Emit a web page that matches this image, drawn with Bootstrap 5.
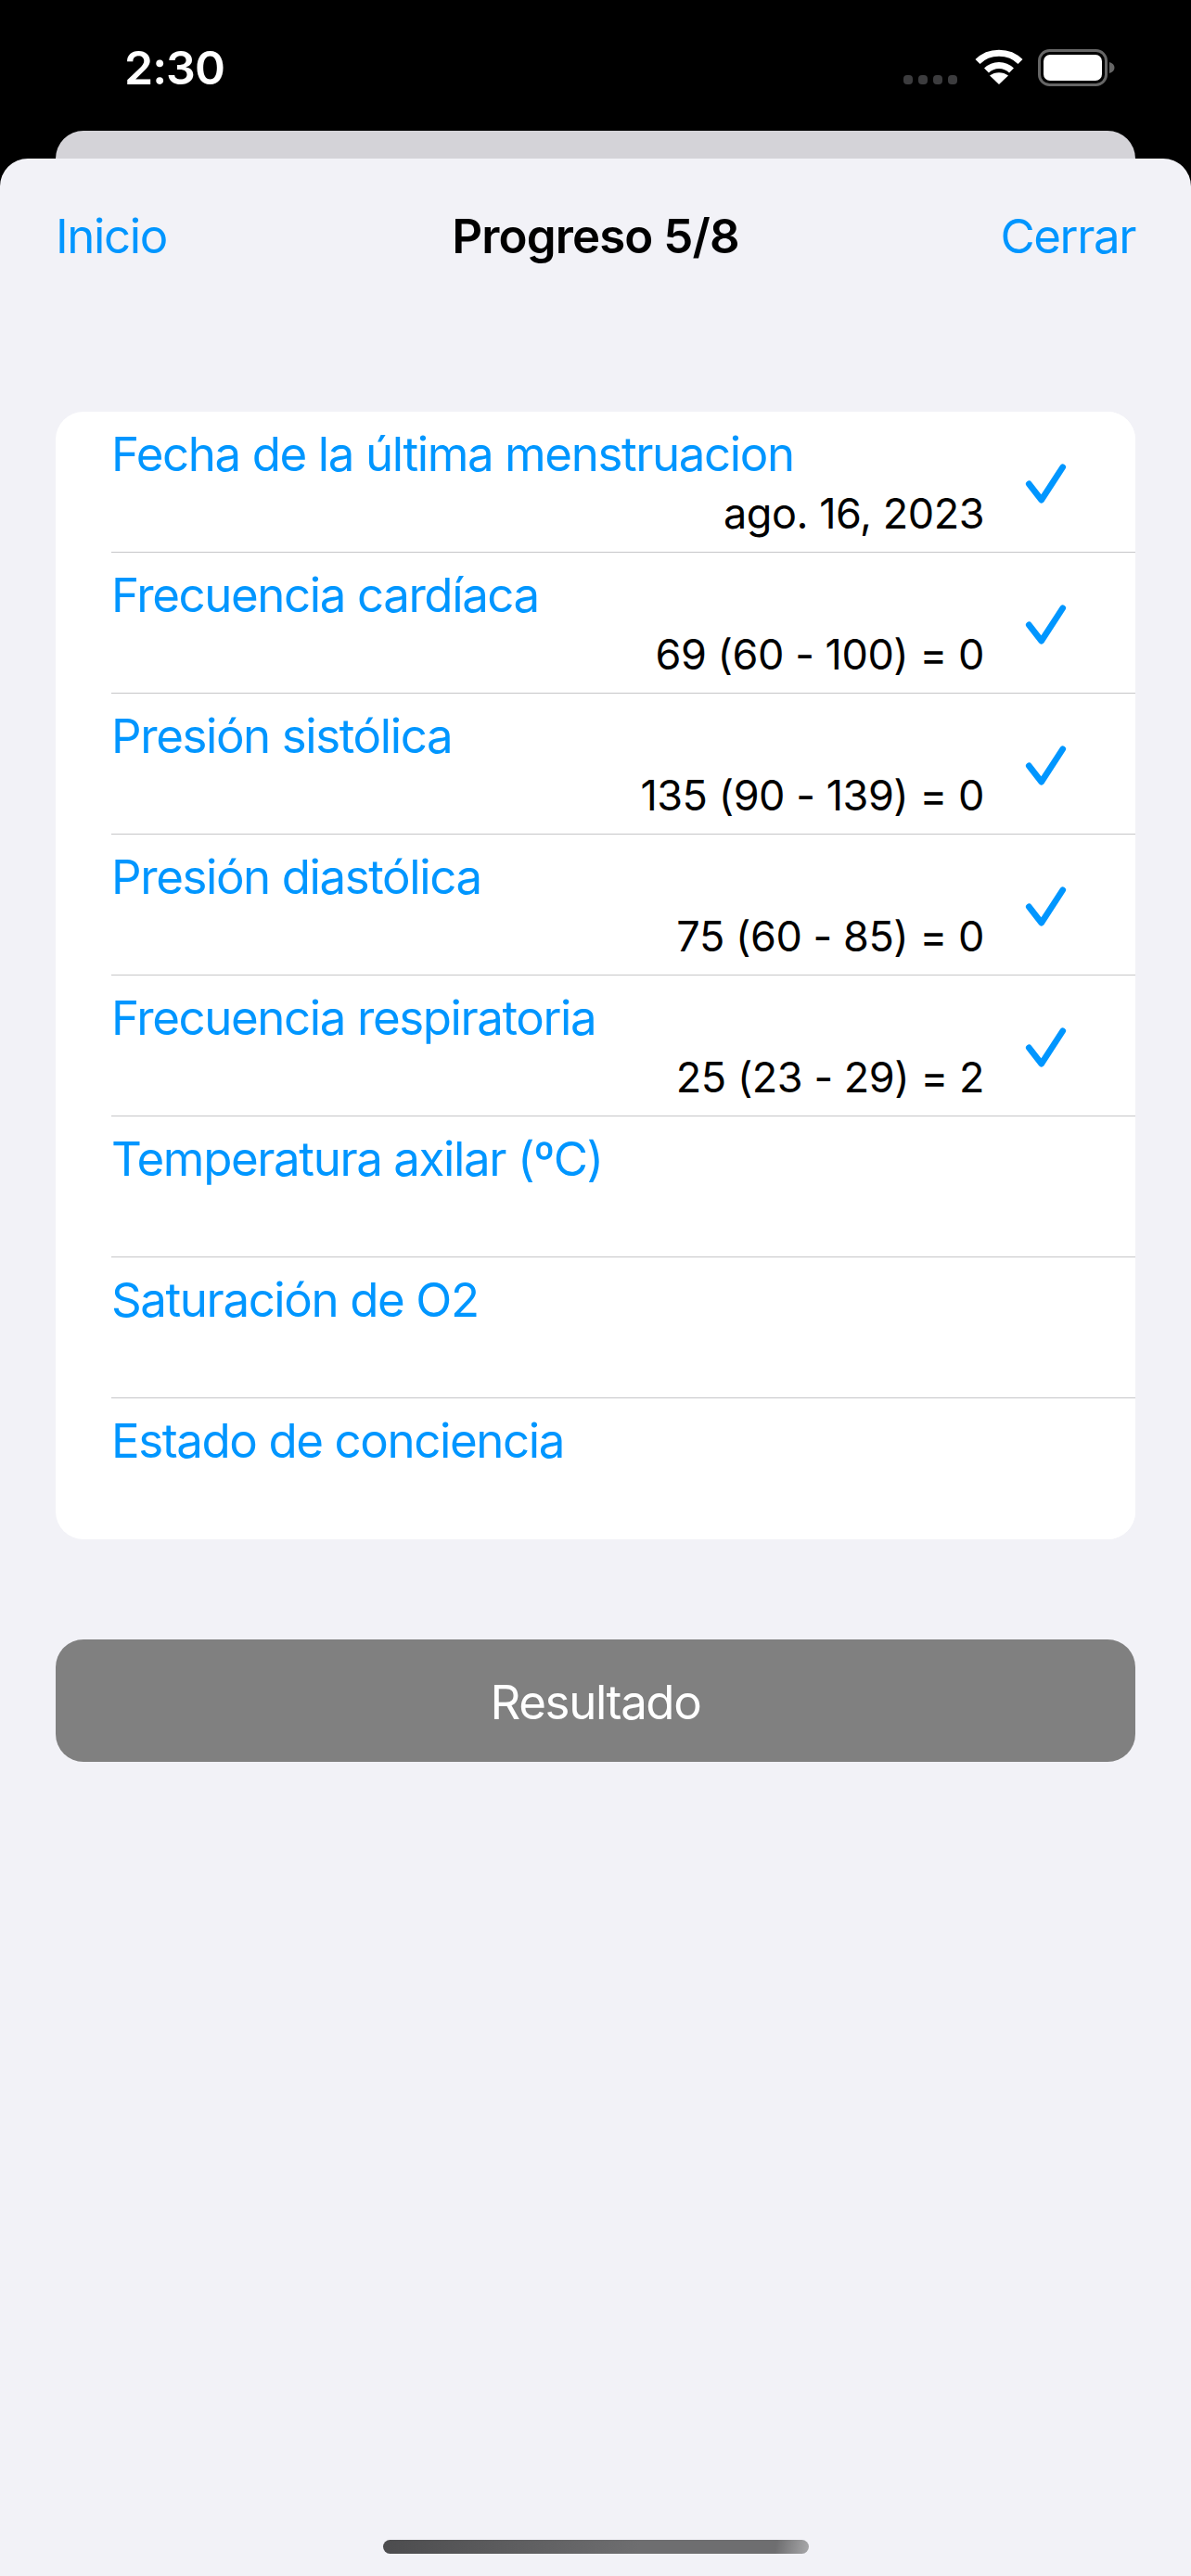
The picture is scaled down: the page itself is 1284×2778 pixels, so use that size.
<!DOCTYPE html>
<html lang="es">
<head>
<meta charset="utf-8">
<title>Progreso</title>
<link href="https://cdn.jsdelivr.net/npm/bootstrap@5.3.0/dist/css/bootstrap.min.css" rel="stylesheet">
<style>
html,body{height:100%;}
body{background:#000;font-family:"Inter","Liberation Sans",sans-serif;font-size:51px;overflow:hidden;color:#000;}
.phone{height:2778px;}
.status-row{height:141px;padding:0 82px 0 134px;color:#fff;}
.clock{font-size:50px;font-weight:600;line-height:1;margin-top:48px;letter-spacing:-1px;}
.status-icons{margin-top:53px;height:40px;}
.status-dots{gap:6px;margin-top:28px;margin-right:19px;}
.status-dots i{display:block;width:10px;height:10px;border-radius:4px;background:#3c3c3e;}
.peek{height:30px;margin:0 60px;background:#d4d3d8;border-radius:30px 30px 0 0;}
.sheet{background:#f2f2f7;border-radius:30px 30px 0 0;}
.sheet-nav{padding:53px 60px 0;height:153px;line-height:1.2;}
.nav-side{flex:1 1 0;}
.sheet-link{color:#0096ff;text-decoration:none;letter-spacing:-1.4px;}
.sheet-title{font-size:51px;font-weight:600;margin:0;line-height:1.2;letter-spacing:-.9px;color:#000;}
.sheet-body{padding:120px 60px 0;}
.form-list{border-radius:30px;overflow:hidden;background:#fff;}
.form-row{height:152px;margin-left:60px;padding:0;background:#fff;border:0;border-radius:0;border-bottom:2px solid #c6c6c8;}
.form-row:last-child{border-bottom:0;}
.row-text{width:941px;height:100%;}
.row-label{color:#0096ff;line-height:60px;padding-top:16px;letter-spacing:-1.4px;}
.row-value{color:#000;font-size:45px;line-height:60px;text-align:right;margin-top:4px;letter-spacing:-.45px;}
.row-check{width:90px;padding-left:44px;}
.result-btn{display:block;width:100%;height:132px;margin-top:108px;background:#808080;border:0;border-radius:30px;color:#fff;font-size:51px;letter-spacing:-1.4px;padding-top:10px;}
.result-btn:hover,.result-btn:active{background:#808080;color:#fff;}
.home-wrap{padding-bottom:24px;}
.home-bar{width:459px;height:15px;border-radius:8px;background:linear-gradient(100deg,#4c4c4e 0%,#6e6e70 60%,#6e6e70 92%,#a8a8aa 100%);}
</style>
</head>
<body>
<div class="phone d-flex flex-column">
  <div class="status-row d-flex justify-content-between">
    <div class="clock">2:30</div>
    <div class="status-icons d-flex">
      <div class="status-dots d-flex"><i></i><i></i><i></i><i></i></div>
      <svg width="52" height="38" viewBox="0 0 52 38" class="me-3" aria-hidden="true">
        <path d="M3 13.5C15 1 37 1 49 13.5" fill="none" stroke="#fff" stroke-width="7"/>
        <path d="M12.5 23C20 15.500 32 15.500 39.500 23" fill="none" stroke="#fff" stroke-width="7"/>
        <path d="M26 38L16 28.500C21.500 24 30.500 24 36 28.500Z" fill="#fff"/>
      </svg>
      <svg width="83" height="40" viewBox="0 0 83 40" aria-hidden="true">
        <rect x="1.500" y="1.500" width="72" height="37" rx="11" fill="none" stroke="#666" stroke-width="3"/>
        <rect x="6" y="6" width="63" height="28" rx="7" fill="#fff"/>
        <path d="M77 14C80.500 15 82.500 17 82.500 20S80.500 25 77 26Z" fill="#666"/>
      </svg>
    </div>
  </div>
  <div class="peek"></div>
  <div class="sheet flex-grow-1 d-flex flex-column">
    <div class="sheet-nav d-flex justify-content-between align-items-start">
      <div class="nav-side"><a href="#" class="sheet-link">Inicio</a></div>
      <h1 class="sheet-title">Progreso 5/8</h1>
      <div class="nav-side text-end"><a href="#" class="sheet-link">Cerrar</a></div>
    </div>
    <div class="sheet-body flex-grow-1">
      <div class="form-list">
        <div class="list-group list-group-flush">
          <div class="list-group-item form-row d-flex">
            <div class="row-text"><div class="row-label">Fecha de la última menstruacion</div><div class="row-value">ago. 16, 2023</div></div>
            <div class="row-check d-flex align-items-center"><svg width="48" height="48" viewBox="0 0 48 48" aria-hidden="true"><path d="M4.500 26L18.500 44L42.500 7" fill="none" stroke="#0096ff" stroke-width="7" stroke-linecap="round" stroke-linejoin="round"/></svg></div>
          </div>
          <div class="list-group-item form-row d-flex">
            <div class="row-text"><div class="row-label">Frecuencia cardíaca</div><div class="row-value">69 (60 - 100) = 0</div></div>
            <div class="row-check d-flex align-items-center"><svg width="48" height="48" viewBox="0 0 48 48" aria-hidden="true"><path d="M4.500 26L18.500 44L42.500 7" fill="none" stroke="#0096ff" stroke-width="7" stroke-linecap="round" stroke-linejoin="round"/></svg></div>
          </div>
          <div class="list-group-item form-row d-flex">
            <div class="row-text"><div class="row-label">Presión sistólica</div><div class="row-value">135 (90 - 139) = 0</div></div>
            <div class="row-check d-flex align-items-center"><svg width="48" height="48" viewBox="0 0 48 48" aria-hidden="true"><path d="M4.500 26L18.500 44L42.500 7" fill="none" stroke="#0096ff" stroke-width="7" stroke-linecap="round" stroke-linejoin="round"/></svg></div>
          </div>
          <div class="list-group-item form-row d-flex">
            <div class="row-text"><div class="row-label">Presión diastólica</div><div class="row-value">75 (60 - 85) = 0</div></div>
            <div class="row-check d-flex align-items-center"><svg width="48" height="48" viewBox="0 0 48 48" aria-hidden="true"><path d="M4.500 26L18.500 44L42.500 7" fill="none" stroke="#0096ff" stroke-width="7" stroke-linecap="round" stroke-linejoin="round"/></svg></div>
          </div>
          <div class="list-group-item form-row d-flex">
            <div class="row-text"><div class="row-label">Frecuencia respiratoria</div><div class="row-value">25 (23 - 29) = 2</div></div>
            <div class="row-check d-flex align-items-center"><svg width="48" height="48" viewBox="0 0 48 48" aria-hidden="true"><path d="M4.500 26L18.500 44L42.500 7" fill="none" stroke="#0096ff" stroke-width="7" stroke-linecap="round" stroke-linejoin="round"/></svg></div>
          </div>
          <div class="list-group-item form-row d-flex">
            <div class="row-text"><div class="row-label">Temperatura axilar (ºC)</div></div>
          </div>
          <div class="list-group-item form-row d-flex">
            <div class="row-text"><div class="row-label">Saturación de O2</div></div>
          </div>
          <div class="list-group-item form-row d-flex">
            <div class="row-text"><div class="row-label">Estado de conciencia</div></div>
          </div>
        </div>
      </div>
      <button type="button" class="btn result-btn">Resultado</button>
    </div>
    <div class="home-wrap d-flex justify-content-center"><div class="home-bar"></div></div>
  </div>
</div>
<script src="https://cdn.jsdelivr.net/npm/bootstrap@5.3.0/dist/js/bootstrap.bundle.min.js"></script>
</body>
</html>
